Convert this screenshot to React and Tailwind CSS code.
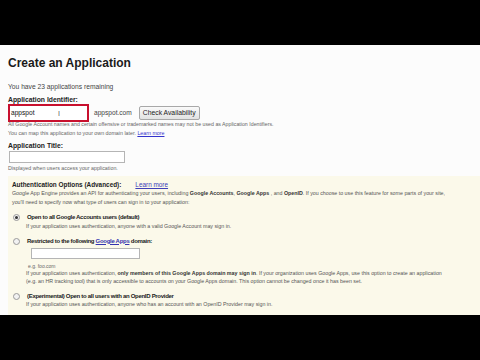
import React from 'react';

function Radio({ checked }) {
    return (
        <span className="w-[7px] h-[7px] rounded-full border border-[#9a9a9a] bg-[#f2f2f2] flex items-center justify-center shrink-0">
            {checked && <span className="w-[3px] h-[3px] rounded-full bg-[#333]" />}
        </span>
    );
}

export default function App() {
    return (
        <div className="w-[480px] h-[360px] overflow-hidden bg-black flex flex-col" style={{ fontFamily: '"Liberation Sans", Arial, sans-serif' }}>
            <div className="h-[45px] shrink-0 bg-black" />

            <div className="h-[270px] shrink-0 bg-[#fcfcfc] pl-[8px] flex flex-col overflow-hidden text-[#333]">
                <div className="h-[16px] mt-[10px] flex items-center text-[12px] font-bold text-[#1a1a1a]">Create an Application</div>

                <div className="h-[8px] mt-[12px] flex items-center text-[6.7px] text-[#444]">You have 23 applications remaining</div>

                <div className="h-[7px] mt-[6px] flex items-center text-[6.8px] font-bold text-[#222]">Application Identifier:</div>

                <div className="h-[18px] flex items-center">
                    <div className="w-[81px] h-[18px] border-2 border-[#c8102e] bg-white flex items-center pl-[1px] text-[6.6px] text-[#111] relative">
                        appspot
                        <span className="absolute left-[48px] top-[4px] text-[7px] text-[#555] leading-none">I</span>
                    </div>
                    <span className="ml-[5px] text-[6.6px] text-[#444]">appspot.com</span>
                    <button className="ml-[7px] h-[14px] px-[3px] border border-[#a8a8a8] rounded-[2px] bg-gradient-to-b from-[#fafafa] to-[#e2e2e2] text-[6.8px] text-[#222] leading-none">Check Availability</button>
                </div>

                <div className="h-[6px] flex items-center text-[5.25px] text-[#666] whitespace-nowrap">All Google Account names and certain offensive or trademarked names may not be used as Application Identifiers.</div>

                <div className="h-[6px] mt-[3px] flex items-center text-[5.3px] text-[#666] whitespace-nowrap">
                    You can map this application to your own domain later.&nbsp;<span className="text-[#33c] underline">Learn more</span>
                </div>

                <div className="h-[8px] mt-[5px] flex items-center text-[6.8px] font-bold text-[#222]">Application Title:</div>

                <div className="w-[116px] h-[12px] mt-[1px] ml-[1px] border border-[#b5b5b5] bg-white" />

                <div className="h-[6px] mt-[3px] flex items-center text-[5.3px] text-[#666]">Displayed when users access your application.</div>

                <div className="mt-[4px] flex-1 bg-[#fbf9ea] pl-[4px] flex flex-col">
                    <div className="h-[8px] mt-[5px] flex items-center text-[6.4px] font-bold text-[#222] whitespace-nowrap">
                        Authentication Options (Advanced):
                        <span className="ml-[14px] font-normal text-[#4040b8] underline">Learn more</span>
                    </div>

                    <div className="text-[5.3px] leading-[8.5px] text-[#555] whitespace-nowrap">
                        <div>Google App Engine provides an API for authenticating your users, including <b className="text-[#333]">Google Accounts</b>, <b className="text-[#333]">Google Apps</b> , and <b className="text-[#333]">OpenID</b>. If you choose to use this feature for some parts of your site,</div>
                        <div>you'll need to specify now what type of users can sign in to your application:</div>
                    </div>

                    <div className="h-[8px] mt-[7px] ml-[1px] flex items-center gap-[7px] text-[6px] tracking-[-0.3px] font-bold text-[#222] whitespace-nowrap">
                        <Radio checked />
                        Open to all Google Accounts users (default)
                    </div>
                    <div className="h-[6px] mt-[3px] ml-[14px] flex items-center text-[5.3px] text-[#555] whitespace-nowrap">If your application uses authentication, anyone with a valid Google Account may sign in.</div>

                    <div className="h-[8px] mt-[7px] ml-[1px] flex items-center gap-[7px] text-[6px] tracking-[-0.3px] font-bold text-[#222] whitespace-nowrap">
                        <Radio />
                        <span>Restricted to the following <span className="text-[#3333b0] underline">Google Apps</span> domain:</span>
                    </div>
                    <div className="w-[109px] h-[11px] mt-[3px] ml-[19px] border border-[#b5b5b5] bg-white" />
                    <div className="h-[6px] mt-[5px] ml-[16px] flex items-center text-[5px] text-[#666]">e.g. foo.com</div>
                    <div className="ml-[14px] text-[5.3px] leading-[7.5px] text-[#555] whitespace-nowrap">
                        <div>If your application uses authentication, <b className="text-[#333]">only members of this Google Apps domain may sign in</b>. If your organization uses Google Apps, use this option to create an application</div>
                        <div>(e.g. an HR tracking tool) that is only accessible to accounts on your Google Apps domain. This option cannot be changed once it has been set.</div>
                    </div>

                    <div className="h-[8px] mt-[7px] ml-[1px] flex items-center gap-[7px] text-[6px] tracking-[-0.3px] font-bold text-[#222] whitespace-nowrap">
                        <Radio />
                        (Experimental) Open to all users with an OpenID Provider
                    </div>
                    <div className="h-[6px] mt-[2px] ml-[14px] flex items-center text-[5.3px] text-[#555] whitespace-nowrap">If your application uses authentication, anyone who has an account with an OpenID Provider may sign in.</div>
                </div>
            </div>

            <div className="h-[45px] shrink-0 bg-black" />
        </div>
    );
}
